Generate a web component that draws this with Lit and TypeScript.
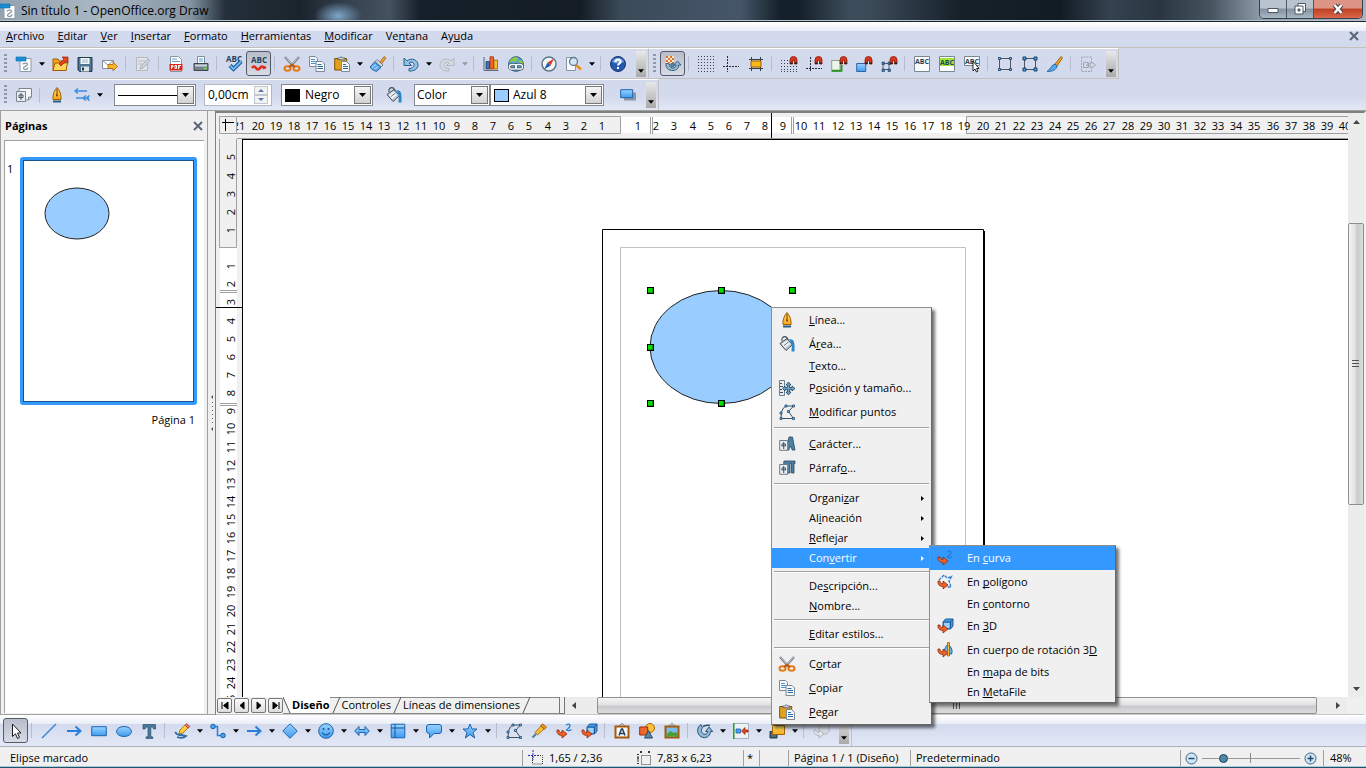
import { LitElement, html, svg, css, nothing } from "lit";
import { customElement } from "lit/decorators.js";
import { classMap } from "lit/directives/class-map.js";

const magnet = svg`<path d="M9 8V4a3.5 3.5 0 0 1 7 0v4h-2.500V4.500h-2V8z" fill="#d8371a" stroke="#8e1503" stroke-width=".8"/><path d="M9 6.500h2.500V8H9zM13.500 6.500H16V8h-2.500z" fill="#222"/>`;
const hook = svg`<path d="M1 7c-.5 4 2 5.500 5 5.300V15l5-4-5-4v2.500C4 9.700 3 9 3 7z" fill="#f0612a" stroke="#8f2a08" stroke-width=".8"/>`;
const props = svg`<path d="M.7 4.500h8v9.800h-8z" fill="#e8ecf0" stroke="#6b7d8c"/><path d="M4.700 6v7M3 8h3.500v2H3z" stroke="#40525f" fill="#fff"/>`;

const ICONS: Record<string, unknown> = {
  doc: svg`<path d="M4 2.500h11v13H4z" fill="#fff" stroke="#8a9ba8"/><path d="M0 1h10v4H0z" fill="#1b8fd6" stroke="#0a6cab" stroke-width=".6"/><path d="M6.500 8q5-2 5 .5c0 2-4.500 2-4 4 .5 1.500 4 1.500 4.500-1" fill="none" stroke="#8d9aa6" stroke-width="1.300"/>`,
  open: svg`<path d="M1 3h5l1 2h7v9.500H1z" fill="#f3a61d" stroke="#a55b04"/><path d="M3 7h12.500L14 14.500H1z" fill="#ffd75a" stroke="#a55b04"/><path d="M7 8l5-5-2-2h6v6l-2-2-5 5z" fill="#e8451c" stroke="#8f1e05" stroke-width=".7"/>`,
  save: svg`<path d="M1 1.500h14v14H2.500L1 14z" fill="#4e7590" stroke="#22394a"/><path d="M3.500 2h9v6h-9z" fill="#f4f8fb"/><path d="M4 10.500h8v5H4z" fill="#dce4ea"/><path d="M5 11.500h2v3H5z" fill="#22394a"/><path d="M5 4h6M5 6h6" stroke="#9fb6c6"/>`,
  mail: svg`<path d="M.5 4.500h11v8H.5z" fill="#fff" stroke="#8593a0"/><path d="M.5 4.500L6 9l5.500-4.500" fill="none" stroke="#8593a0"/><path d="M6 8.500h5V6l4.500 4.500L11 15v-2.500H6z" fill="#f8b62a" stroke="#a96403" stroke-width=".8"/>`,
  edit: svg`<path d="M1.500 1.500h11v13h-11z" fill="#e2e4ea" stroke="#b4b8c0"/><path d="M3 5h7M3 8h5" stroke="#b4b8c0"/><path d="M5 13l1-3 7-7 2 2-7 7z" fill="#cfd2d8" stroke="#a4a8b0" stroke-width=".8"/>`,
  pdf: svg`<path d="M2.500.5h8l3 3v12h-11z" fill="#fff" stroke="#8695a2"/><path d="M4 3h5M4 5.500h8" stroke="#5f9ed1"/><path d="M1.500 8h13v6.500h-13z" fill="#da2a1b"/><path d="M3.500 13v-3.500h1.500V11H3.500M7 9.500v3h1.500v-3zM10.500 13V9.500h2.500M10.500 11H12" fill="none" stroke="#fff"/>`,
  print: svg`<path d="M4.500.5h7v7h-7z" fill="#fff" stroke="#7d8b97"/><path d="M6 3h4M6 5h4" stroke="#4b9be0"/><path d="M1 7.500h14v7H1z" fill="#76828c" stroke="#3c464e"/><path d="M2 8.500h12v2H2z" fill="#cfd6db"/><path d="M11 12.500h3" stroke="#66dd44" stroke-width="1.500"/>`,
  spell: svg`<text x="0" y="6" class="abc">ABC</text><path d="M4 9.500l3.500 3.500L15 5.500" fill="none" stroke="#17518c" stroke-width="4"/><path d="M4 9.500l3.500 3.500L15 5.500" fill="none" stroke="#69b7f5" stroke-width="2"/>`,
  auto: svg`<text x="0" y="7" class="abc">ABC</text><path d="M1 12q2-3 4 0t4 0 4 0l2-1" fill="none" stroke="#e02a1c" stroke-width="2.500"/>`,
  cut: svg`<path d="M1 1l9 10M15 1L6 11" stroke="#75808a" stroke-width="2.200"/><path d="M1.500 1l8 9M14.500 1l-8 9" stroke="#dde3e8" stroke-width=".8"/><ellipse cx="3.500" cy="12.500" rx="3" ry="2.200" fill="none" stroke="#e67a17" stroke-width="2"/><ellipse cx="12.500" cy="12.500" rx="3" ry="2.200" fill="none" stroke="#e67a17" stroke-width="2"/><path d="M5 11l3-2.500L11 11" fill="none" stroke="#c25805" stroke-width="2"/>`,
  copy: svg`<path d="M.5.500h6l2 2v8h-8z" fill="#f6f9fb" stroke="#7a8a98"/><path d="M2 3.500h4M2 5.500h5M2 7.500h5" stroke="#4d94cf"/><path d="M7 5.500h6l2.500 2.500v7.500H7z" fill="#f6f9fb" stroke="#7a8a98"/><path d="M8.500 8.500h4M8.500 10.500h5.500M8.500 12.500h5.500" stroke="#2f6da3"/>`,
  paste: svg`<path d="M.7 2.500h12v11.500H.7z" fill="#e2a11c" stroke="#7d5205"/><path d="M3.500 3.500V2h2a2 2 0 0 1 3.500 0h2v2z" fill="#cfd6db" stroke="#4a535a" stroke-width=".8"/><path d="M7.500 5.500h5l3 3v7h-8z" fill="#f6f9fb" stroke="#7a8a98"/><path d="M9 8.500h3M9 10.500h5M9 12.500h5" stroke="#2f6da3"/>`,
  brush: svg`<path d="M9.500 6.500l4.500-6 2 1.500-4.500 6z" fill="#f0a42a" stroke="#8c5408" stroke-width=".7"/><path d="M7 3.500l6 5.500-2 2-6-5.500z" fill="#cdd7df" stroke="#4b6072" stroke-width=".7"/><path d="M4.500 6l6.500 5.500L6.500 15.500Q2 14.500 0 11z" fill="#57a7ee" stroke="#1c5794" stroke-width=".8"/><path d="M2 11.500l4-3M4 13.500l4-3" stroke="#bfe0fa"/>`,
  undo: svg`<path d="M1 2v7.500h7.500L6 7c3-2 5.500 0 5 2.500-.5 2-2.500 3-5 3V15c5 .5 8.500-2 9-5.500C15.500 4 8.500 1 4 5z" fill="#8fc3e8" stroke="#295f88"/>`,
  redo: svg`<path d="M15 2v7.500H7.500L10 7C7 5 4.500 7 5 9.500c.5 2 2.500 3 5 3V15c-5 .5-8.500-2-9-5.500C.5 4 7.500 1 12 5z" fill="#d4d9e2" stroke="#b2b7c1"/>`,
  chart: svg`<path d="M1 1v13.500h14.500" fill="none" stroke="#5c6b78"/><path d="M3 5.500h3.500V13H3z" fill="#3e72b0" stroke="#1f3f68" stroke-width=".8"/><path d="M7 .8h3.500V13H7z" fill="#f1652a" stroke="#9b2c08" stroke-width=".8"/><path d="M11 4h3.500v9H11z" fill="#f7bf2f" stroke="#9b6504" stroke-width=".8"/>`,
  globe: svg`<circle cx="8" cy="8" r="7.300" fill="#4fa0de" stroke="#2b5a80"/><path d="M1.500 5q2.500-4 7-4l2 2-3 3-4-1-2 2zM10 5l4-1 1 3-1 2z" fill="#8cc940"/><rect x="1.500" y="8.500" width="7" height="4.500" rx="2.200" fill="none" stroke="#435059" stroke-width="2.800"/><rect x="7.500" y="8.500" width="7" height="4.500" rx="2.200" fill="none" stroke="#435059" stroke-width="2.800"/><rect x="1.500" y="8.500" width="7" height="4.500" rx="2.200" fill="none" stroke="#f4f7f9" stroke-width="1.300"/><rect x="7.500" y="8.500" width="7" height="4.500" rx="2.200" fill="none" stroke="#f4f7f9" stroke-width="1.300"/>`,
  compass: svg`<circle cx="8" cy="8" r="7" fill="#f1f6fa" stroke="#5f7889" stroke-width="1.500"/><path d="M13 2.500L9.700 9.500 6.500 6.500z" fill="#e33a22"/><path d="M3 13.500L6.500 6.500l3.200 3z" fill="#1e5cb4"/>`,
  find: svg`<path d="M.5 1.500h9v13h-9z" fill="#f6f9fb" stroke="#8695a2"/><path d="M10 9l5 4.500" stroke="#e79218" stroke-width="2.500"/><circle cx="7.500" cy="5.500" r="4" fill="#cfe6f8" stroke="#68798a" stroke-width="1.300"/>`,
  help: svg`<circle cx="8" cy="8" r="7.500" fill="#2459b0" stroke="#143570"/><path d="M2 6a6.500 6.500 0 0 1 12 0q-6 3-12 0z" fill="#6f9ee0"/><path d="M5.500 6q0-2.500 2.500-2.500T10.500 6C10.500 7.500 8 7.500 8 9.500M8 11v2" fill="none" stroke="#fff" stroke-width="2"/>`,
  edge: svg`<path d="M1 7c-.5 5 2.500 7.700 7 7.500 4-.3 6-2.500 5.500-5.500H16L12.500 5 8.500 9H11c0 2-1.500 3.200-3.500 3C5 11.700 4 10 4.500 8z" fill="#8fbad8" stroke="#34556f" stroke-width=".9"/><path d="M1 0h8v7H1z" fill="#fdeacb"/><path d="M1 0h2v2H1zM5 0h2v2H5zM3 2h2v2H3zM7 2h2v2H7zM1 4h2v2H1zM5 4h2v2H5zM3 6h2v1H3zM7 6h2v1H7z" fill="#d9722c"/><circle cx="7.500" cy="9" r="1.800" fill="#5b89aa" stroke="#34556f" stroke-width=".8"/>`,
  grid: svg`<path d="M0 .5h16M0 3.500h16M0 6.500h16M0 9.500h16M0 12.500h16M0 15.500h16" stroke="#39424b" stroke-dasharray="1 2"/>`,
  guides: svg`<path d="M4.500 0v16M0 10.500h16" stroke="#27303a" stroke-dasharray="2 1"/>`,
  helpl: svg`<path d="M3.500 1v14M12.500 1v14M1 3.500h14M1 12.500h14" stroke="#333c44"/><path d="M3 5h10v6H3z" fill="#f9ba1b" stroke="#a35f00"/>`,
  mgrid: svg`<path d="M0 4.500h8M0 7.500h8M0 10.500h16M0 13.500h16M0 15.500h16" stroke="#39424b" stroke-dasharray="1 2"/>${magnet}`,
  mguide: svg`<path d="M4.500 1v15M0 12.500h16" stroke="#27303a" stroke-dasharray="2 1"/>${magnet}`,
  mmargin: svg`<path d="M.7 4.500H9V15.500H.7z" fill="#edf4ea" stroke="#8aa08a"/><path d="M1 14.800h9.500V9" fill="none" stroke="#2f9325" stroke-width="2"/>${magnet}`,
  mframe: svg`<path d="M.7 7.500h9v8h-9z" fill="url(#blue)" stroke="#2d66a5"/>${magnet}`,
  mpoint: svg`<path d="M2 7.500h6v6H2z" fill="none" stroke="#50616f"/><path d="M1 6h2.500v2.500H1zM7 6h2.500v2.500H7zM1 13h2.500v2.500H1zM7 13h2.500v2.500H7z" fill="#3e79ae" stroke="#1f3f60" stroke-width=".6"/>${magnet}`,
  abc1: svg`<path d="M.5.500h15v15H.5z" fill="#fafcfd" stroke="#7b8790"/><text x="1" y="8" class="abs">ABC</text>`,
  abc2: svg`<path d="M.5.500h15v15H.5z" fill="#fafcfd" stroke="#7b8790"/><path d="M1 2h14v8H1z" fill="#a1e43a"/><text x="1" y="9" class="abs">ABC</text>`,
  abc3: svg`<path d="M.5.500h15v9H.5z" fill="#fafcfd" stroke="#7b8790"/><text x="1" y="8" class="abs">ABC</text><path d="M9 5v10l2-2 1.500 3 1.500-1-1.500-2.500H15z" fill="#fff" stroke="#111" stroke-width=".9"/>`,
  box1: svg`<path d="M2.500 2.500h11v11h-11z" fill="none" stroke="#4a5661"/><path d="M1.500 1.500h2v2h-2zM12.500 1.500h2v2h-2zM1.500 12.500h2v2h-2zM12.500 12.500h2v2h-2z" fill="#8fc0e8" stroke="#274f73"/>`,
  box2: svg`<path d="M2.500 2.500h11v11h-11z" fill="none" stroke="#4a5661"/><path d="M1 1h3v3H1zM12 1h3v3h-3zM1 12h3v3H1zM12 12h3v3h-3z" fill="#4fa8f0" stroke="#153e66"/>`,
  paint: svg`<path d="M8 8l6-7.500 1.500 1.500L10 10z" fill="#f0a42a" stroke="#8c5408" stroke-width=".8"/><path d="M8 8l2.200 2C9 14 6 15.500 0 15.500 3.500 13.500 4 9 8 8z" fill="#57a7ee" stroke="#1c5794" stroke-width=".8"/>`,
  exit: svg`<path d="M1.500 1v14.500h10V1z" fill="none" stroke="#9da3ae" stroke-dasharray="2 1"/><path d="M3.500 6.500h5v5h-5zM7 8h4V5.500L15.500 9 11 12.500V10H7z" fill="#d6dae4" stroke="#a0a5b0"/>`,
  styles: svg`<path d="M3 1.500h12.500V10l-3 3H3z" fill="#f5f7f9" stroke="#7b8790"/><path d="M12.500 13v-3h3" fill="none" stroke="#7b8790"/><path d="M.5 4.500h9v10h-9z" fill="#e8ecf0" stroke="#7b8790"/><path d="M5 6v7M3 8h4v2.500H3z" stroke="#40525f" fill="#fff"/>`,
  pen: svg`<path d="M8 .5C5 4 3.500 8 4 12.500h8C12.500 8 11 4 8 .5z" fill="url(#gold)" stroke="#a35b03"/><path d="M8 2v6" stroke="#7a3c00"/><circle cx="8" cy="8.500" r="1" fill="#7a3c00"/><path d="M4 14.500h8" stroke="#2c5d80" stroke-width="2"/>`,
  ends: svg`<path d="M1 4h12M4 1.500L1 4l3 2.500M2 11h13M12 8.500L9 11l3 2.500M15.500 8.500L12.500 11l3 2.500" fill="none" stroke="#3d8fe0" stroke-width="1.500"/>`,
  bucket: svg`<path d="M1 7.500L8 2.500l5.500 6L7 14.500z" fill="#c3ccd3" stroke="#3f4c57"/><path d="M3 8l5-3.500 3 3.500-5 4z" fill="#eef2f5"/><path d="M5 9.500L9.500 6" stroke="#6a7782"/><path d="M3 5C2 0 8-1 9 4" fill="none" stroke="#4e5b66" stroke-width="1.300"/><path d="M10 3.500c5-1 6 2.500 5.500 12h-3C13 10 13 7 10 3.500z" fill="#2e86ca"/>`,
  shadow: svg`<path d="M4 5.500h12v8H4z" fill="#8e96a6"/><path d="M.7 2.700h12v8h-12z" fill="url(#blue)" stroke="#1d63ad"/>`,
  arrow: svg`<path d="M4.500 1v12.500l3-2.700 2 4.700 2-1-2-4.500H13z" fill="#fff" stroke="#151b22"/>`,
  line: svg`<path d="M1 15L15 1" stroke="#3a86d6" stroke-width="1.500"/>`,
  right: svg`<path d="M1 8h13M9.500 3.500L14.500 8l-5 4.500" fill="none" stroke="#2a7edb" stroke-width="2"/>`,
  rect: svg`<path d="M.7 3.700h14.600v9H.7z" fill="url(#blue)" stroke="#1d63ad"/>`,
  ellipse: svg`<ellipse cx="8" cy="8.500" rx="7.500" ry="5" fill="url(#blue)" stroke="#1d63ad"/>`,
  text: svg`<path d="M2 1.500h12.500V6h-2L12 4H9.800v9.500l2 .5v1.500H5V14l2-.5V4H4.800L4 6H2z" fill="#47799b" stroke="#2b5069" stroke-width=".7"/>`,
  pencil: svg`<path d="M1 9q2 3 5 3t6 1q-3 3-9 1" fill="none" stroke="#2f6ea8" stroke-width="1.800"/><path d="M5 11l1-4 5-5 3 3-5 5z" fill="#ffcf3a" stroke="#94620a" stroke-width=".8"/><path d="M11 2l1.500-1.500L16 3.500 14 5z" fill="#e8766c" stroke="#a83a32" stroke-width=".7"/>`,
  conn: svg`<path d="M3 3.500h4.500v9H13" fill="none" stroke="#2a7edb" stroke-width="1.500"/><circle cx="3" cy="3.500" r="2.300" fill="#4aa3ee" stroke="#1a5da8"/><circle cx="13" cy="12.500" r="2.300" fill="#4aa3ee" stroke="#1a5da8"/>`,
  diamond: svg`<path d="M8 .8L15.300 8 8 15.300.8 8z" fill="url(#blue)" stroke="#1d63ad"/>`,
  smiley: svg`<circle cx="8" cy="8" r="7.300" fill="url(#blue)" stroke="#1d63ad"/><path d="M4 9.500q4 5 8 0" fill="none" stroke="#14508f" stroke-width="1.200"/><circle cx="5.500" cy="6" r="1" fill="#14508f"/><circle cx="10.500" cy="6" r="1" fill="#14508f"/>`,
  both: svg`<path d="M.7 8L5 3.500v3h6v-3L15.300 8 11 12.500v-3H5v3z" fill="url(#blue)" stroke="#1d63ad"/>`,
  flow: svg`<path d="M1.200 1.200h13.600v13.600H1.200z" fill="url(#blue)" stroke="#1d63ad"/><path d="M5 1v14M1 5h14" stroke="#12549a"/>`,
  callout: svg`<path d="M3 1.500h10q2.500 0 2.500 2.500v4q0 2.500-2.500 2.500H8L3.500 15V10.500Q.5 10.500.5 8V4Q.5 1.500 3 1.500z" fill="url(#blue)" stroke="#1d63ad"/>`,
  star: svg`<path d="M8 1l2 5h5l-4 3.500 1.700 5.500L8 11.500 3.300 15 5 9.500 1 6h5z" fill="url(#blue)" stroke="#1d63ad"/>`,
  points: svg`<path d="M2 14.500h12M2 14.500L2.500 8Q4 3 7 2h7.500L9.500 7.500l5 7" fill="none" stroke="#41525f"/><path d="M1 13.500h2v2H1zM13.500 13.500h2v2h-2zM6 1h2v2H6zM13.500 1h2v2h-2zM8.500 6.500h2v2h-2zM1 8h2v2H1z" fill="#7fb8e6" stroke="#1f4f74" stroke-width=".8"/>`,
  glue: svg`<path d="M1.500 14.500L5 11" stroke="#3f7fb0" stroke-width="2"/><path d="M4 9.500l6-6.500 3 3-6.500 6z" fill="#f7bd37" stroke="#93610a" stroke-width=".8"/><path d="M9.500 2.500L12 .8l3.500 3.500-2 2z" fill="#e9930f" stroke="#93610a" stroke-width=".8"/>`,
  curve: svg`${hook}<path d="M10 2q4-2 4 1-.5 2-3.500 4 2 1.500 5-.5" fill="none" stroke="#2c7bd0" stroke-width="1.300"/>`,
  poly: svg`<path d="M2 6L7 1l3 3 4.500-1.500L12 7l2 6h-4" fill="none" stroke="#2c7bd0" stroke-width="1.300" stroke-dasharray="3 1"/>${hook}`,
  cube: svg`<path d="M6 4l2.500-3H16v7l-2.500 3H6z" fill="#4b9be0" stroke="#1b5a9c"/><path d="M6 4h7.500L16 1M13.500 4v7" fill="none" stroke="#1b5a9c"/><path d="M7 5h5.500v5H7z" fill="#9fd0fa"/>${hook}`,
  lathe: svg`<path d="M11 2C8 5 6.500 9 8 12h6.500c1.500-3 0-7-3.500-10z" fill="#6cb2ee" stroke="#1b5a9c"/>${hook}<path d="M10.500.5h2V14h-2z" fill="#f6b42b" stroke="#8d5a04" stroke-width=".7"/>`,
  fontwork: svg`<path d="M5 3l3-2.500L11 3" fill="none" stroke="#777"/><path d="M1.500 3.500h13v11h-13z" fill="#f3f7fa" stroke="#a45a08" stroke-width="2"/><path d="M5 12.500L7.500 6h1L11 12.500M6 10.500h4" fill="none" stroke="#24425c" stroke-width="1.500"/>`,
  shapes: svg`<circle cx="11" cy="5" r="4.500" fill="#fbc035" stroke="#a66a05"/><path d="M.7 4h8v8h-8z" fill="#f0652b" stroke="#9b2c08"/><path d="M9.500 7.500L13.500 15H5.500z" fill="#5d86a5" stroke="#274a66"/>`,
  gallery: svg`<path d="M5 3l3-2.500L11 3" fill="none" stroke="#777"/><path d="M1.500 3.500h13v11h-13z" fill="#79bdf0" stroke="#a45a08" stroke-width="2"/><path d="M2.500 11l4-3 3 2 2-1 2 1.500V13.500h-11z" fill="#4d9e32"/>`,
  rotate: svg`<path d="M4 1.500C-.5 4-.5 11 4 13.700c4.500 2.500 9 0 9.500-5.200h2.200L12 4 8.500 8.500h2.300c-.3 2.500-2.500 3.500-4.500 2.300C4 9.500 4 6.500 5.500 5z" fill="#8fbbdb" stroke="#2b536f"/><path d="M6 3.500q4-2 7-1" fill="none" stroke="#2b536f" stroke-width="1.500"/>`,
  align: svg`<path d="M.5.500h15v15H.5z" fill="#eef2f6" stroke="#a8b2bc"/><path d="M.8 0v16" stroke="#2da32a" stroke-width="1.600"/><path d="M3 6h4.500v4H3z" fill="#4aa3ee" stroke="#1a5da8" stroke-width=".8"/><path d="M8.500 8l3.500-3.500V7h3v2h-3v2.500z" fill="#e8451c" stroke="#8f1e05" stroke-width=".7"/>`,
  arrange: svg`<path d="M1 8.500h7v6.500H1z" fill="#4a6a80" stroke="#1f3544"/><path d="M3.500 2.500h12v9h-12z" fill="url(#gold)" stroke="#a3620a"/>`,
  extrude: svg`<path d="M6 4l2.500-3H16v7l-2.500 3H6z" fill="#d5d9e2" stroke="#b0b5c0"/><path d="M1 7c-.5 4 2 5.500 5 5.300V15l5-4-5-4v2.500C4 9.700 3 9 3 7z" fill="#e2e5ec" stroke="#aeb3be"/>`,
  position: svg`<path d="M.5.500h5v15h-5z" fill="#e8ecf0" stroke="#6b7d8c"/><path d="M1 3.500h2M1 6.500h3M1 9.500h2M1 12.500h3" stroke="#40525f"/><path d="M9.500 2l2.500 3h-1.500v2.500H13V6l3 2.500-3 2.500V9.500h-2.500V12H12l-2.500 3L7 12h1.500V9.500H6V11L3.500 8.500 6 6v1.500h2.500V5H7z" fill="#6fa4c8" stroke="#1e3f58" stroke-width=".8"/>`,
  character: svg`<path d="M7 14L10 1h3.500L16 14h-3l-.5-3h-2l-.5 3z" fill="#4d809f" stroke="#264a62" stroke-width=".8"/>${props}`,
  paragraph: svg`<path d="M5 1h11v2.500h-1V13h-2.500V3.500h-1.500V13H8.500V8C5.500 8 4 3 5 1z" fill="#4d809f" stroke="#264a62" stroke-width=".8"/>${props}`,
  pos: svg`<path d="M5 0v10M0 5.500h10" stroke="#2525d8" stroke-dasharray="2 1"/><path d="M4.500 6v8h10V5.500h-5" fill="none" stroke="#333" stroke-dasharray="1 1"/>`,
  size: svg`<path d="M5.500 5.500h9v9h-9z" fill="none" stroke="#333" stroke-dasharray="1 1"/><path d="M4 1l2 2M6 1L4 3M12 1l2 2M14 1l-2 2M1 4.500h2M1 8h2M1 13.500h2M2 6v6" stroke="#333"/>`,
  close: svg`<path d="M4 4l8 8M12 4l-8 8" stroke="#5a6675" stroke-width="2"/>`,
};

const icon = (name: string) => svg`<svg class="icon" viewBox="0 0 16 16" width="16" height="16" aria-hidden="true">${ICONS[name]}</svg>`;

/* Button names; "v" is a drop-down arrow, "|" a separator, a trailing "!" marks a pressed button. */
const STANDARD = "doc v open save mail | edit | pdf print | spell auto! | cut copy paste v brush | undo v redo v | chart globe | compass find v | help".split(" ");
const OPTIONS = "edge! | grid guides helpl | mgrid mguide mmargin mframe mpoint | abc1 abc2 abc3 | box1 box2 paint | exit".split(" ");
const DRAWING = "arrow! | line right rect ellipse text | pencil v conn v right v diamond v smiley v both v flow v callout v star v | points glue curve cube | fontwork shapes gallery | rotate v align v arrange v | extrude".split(" ");
const MENUS = ["&Archivo", "&Editar", "&Ver", "&Insertar", "&Formato", "&Herramientas", "&Modificar", "Ve&ntana", "Ay&uda"];

type Item = { label: string; icon?: string; sub?: boolean; on?: boolean } | null;
const CONTEXT: Item[] = [
  { label: "&Línea...", icon: "pen" },
  { label: "Á&rea...", icon: "bucket" },
  { label: "&Texto..." },
  { label: "P&osición y tamaño...", icon: "position" },
  { label: "&Modificar puntos", icon: "points" },
  null,
  { label: "&Carácter...", icon: "character" },
  { label: "Párraf&o...", icon: "paragraph" },
  null,
  { label: "Organi&zar", sub: true },
  { label: "Al&ineación", sub: true },
  { label: "&Reflejar", sub: true },
  { label: "Con&vertir", sub: true, on: true },
  null,
  { label: "De&scripción..." },
  { label: "&Nombre..." },
  null,
  { label: "&Editar estilos..." },
  null,
  { label: "C&ortar", icon: "cut" },
  { label: "&Copiar", icon: "copy" },
  { label: "&Pegar", icon: "paste" },
];
const CONVERT: Item[] = [
  { label: "En &curva", icon: "curve", on: true },
  { label: "En &polígono", icon: "poly" },
  { label: "En &contorno" },
  { label: "En &3D", icon: "cube" },
  { label: "En cuerpo de rotación 3&D", icon: "lathe" },
  { label: "En &mapa de bits" },
  { label: "En &MetaFile" },
];

const mnemonic = (s: string) => {
  const i = s.indexOf("&");
  return html`${s.slice(0, i)}<u>${s[i + 1]}</u>${s.slice(i + 2)}`;
};

/* Screen position of the n-th centimetre, measured from the page edge. */
const cm = (n: number) => Math.round((n * 725) / 40);
const range = (a: number, b: number) => Array.from({ length: b - a + 1 }, (_, i) => a + i).filter((n) => n !== 0);

@customElement("app-root")
export class AppRoot extends LitElement {
  static styles = css`
    :host { display: flex; flex-direction: column; height: 100vh; overflow: hidden; position: relative; font: 11px/16px "Open Sans", "Noto Sans", sans-serif; color: #000; background: #f0f0f0; }
    * { box-sizing: border-box; }
    button, select, input { font: inherit; color: inherit; margin: 0; padding: 0; border: 0; background: none; border-radius: 0; appearance: none; outline: none; }
    button { display: flex; align-items: center; justify-content: center; white-space: nowrap; }
    ul { list-style: none; margin: 0; padding: 0; }
    u { text-underline-offset: 1px; text-decoration-thickness: 1px; text-decoration-skip-ink: none; }
    .defs { position: absolute; }
    .icon { display: block; flex: none; overflow: visible; }
    .abc { font: bold 8px "Open Sans", sans-serif; fill: #24425c; }
    .abs { font: bold 7px "Open Sans", sans-serif; fill: #24425c; }

    .title { display: flex; align-items: center; height: 22px; flex: none; gap: 5px; border-bottom: 1px solid #1c242c; box-shadow: inset 0 -1px #b4bfca;
      background:
        radial-gradient(ellipse 24px 14px at 338px 16px, #7fa6c9, transparent),
        linear-gradient(90deg, #93a3b2 0, #aab7c4 100px, #8595a3 190px, #24303a 225px, #1a242d 300px, #35434f 350px, #44525f 390px, #16202a 420px, #141d26 580px, #3b4a58 620px, #46566a 740px, #15212a 780px, #15212a 800px, #3d4d5b 850px, #3c4b59 870px, #16212a 960px, #131c25 1060px, #34424f 1110px, #2a3742 1160px, #45535f 1210px, #8d9ba8 1260px, #a9b5c0 100%); }
    .title h1 { flex: 1; margin: 0; font: 12px/16px "Open Sans", sans-serif; }
    .win { display: flex; align-self: flex-start; height: 19px; margin-right: 3px; border: 1px solid #35424e; border-top: 0; border-radius: 0 0 5px 5px; overflow: hidden; }
    .win button { width: 27px; background: linear-gradient(#b9c3cd 45%, #8492a0 50%, #a9b8c6); border-right: 1px solid #4c5a67; }
    .win .quit { width: 48px; border: 0; background: linear-gradient(#dc9585 45%, #c03f24 50%, #d9694a); }

    .bars { flex: none; background: linear-gradient(#fff 0, #e9edf7 9px, #d3daed 9px, #d3daed 74px, #e3e8f6 88px); }
    .menubar { display: flex; height: 26px; align-items: center; justify-content: space-between; border-bottom: 1px solid #c3c0bb; padding: 2px 4px 0 0; }
    .menubar ul { display: flex; gap: 1px; }
    .menubar li button { padding: 0 6px; height: 20px; }
    .row { display: flex; height: 31px; }
    .tools { display: flex; align-items: center; border-top: 1px solid #fff; border-bottom: 1px solid #c3c0bb; border-right: 1px solid #c3c0bb; padding-right: 2px; }
    .row.second .tools { border-bottom: 0; }
    .grip { width: 3px; height: 20px; margin: 0 4px; background: repeating-linear-gradient(#8f97a8 0 2px, transparent 2px 4px); }
    .drawing .grip { display: none; }
    .tool { width: 25px; height: 25px; flex: none; }
    .tool.on { border: 1px solid #555b66; border-radius: 3px; background: linear-gradient(#b9bdca, #d8dbe5); }
    .drop { width: 11px; height: 25px; flex: none; }
    .sep { width: 1px; height: 15px; margin: 0 4px 0 3px; background: #b9bccb; flex: none; }
    .more { width: 10px; height: 26px; margin-left: 6px; background: linear-gradient(#e9e9ea, #a9a9aa); align-items: flex-end; padding-bottom: 4px; flex: none; }
    .combo { display: flex; align-items: center; height: 22px; border: 1px solid #85888f; background: #fff; padding: 1px; font-size: 12px; }
    .combo select { flex: 1; width: 0; padding-left: 5px; height: 18px; }
    .combo .btn { width: 17px; height: 18px; display: flex; align-items: center; justify-content: center; border: 1px solid #777; background: linear-gradient(#f5f5f5, #d2d2d2); }
    .combo svg { display: block; flex: none; }
    .stroke { flex: 1; margin-left: 2px; border-top: 1px solid #000; }
    .w-line { width: 82px; margin-left: 9px; }
    .w-line select { position: absolute; width: 60px; }
    .w-width { width: 68px; margin: 0 9px 0 8px; border-color: #b5b8c0; }
    .w-width input { width: 48px; padding-left: 2px; }
    .spin { display: flex; flex-direction: column; }
    .spin button { width: 14px; height: 9px; border: 1px solid #c3c6cc; background: #f2f2f2; }
    .w-color { width: 92px; }
    .w-fill { width: 76px; margin-left: 8px; }
    .w-fill select { padding-left: 1px; }
    .w-blue { width: 114px; margin-right: 11px; }
    .w-blue select { padding-left: 4px; }
    .swatch { width: 15px; height: 13px; margin-left: 2px; border: 1px solid #000; background: #000; }
    .swatch.blue { background: #99ccff; }
    .bucket { margin-left: 8px; }

    .main { display: flex; flex: 1; min-height: 0; border-top: 1px solid #a0a0a0; }
    .side { width: 208px; flex: none; display: flex; flex-direction: column; border-right: 1px solid #a0a0a0; border-left: 1px solid #a0a0a0; padding: 0 0 1px 3px; border-bottom: 1px solid #a0a0a0; }
    .side header { display: flex; justify-content: space-between; align-items: center; height: 29px; font-weight: bold; padding: 1px 1px 0; }
    .side h2 { margin: 0; font-size: 11px; }
    .pages { flex: 1; background: #fff; border: 1px solid #a0a0a0; border-right: 0; border-bottom: 0; margin-right: 3px; padding: 16px 6px 0 2px; display: grid; grid-template-columns: 13px 177px; align-content: start; }
    .pages span { padding-top: 4px; }
    .thumb { display: block; height: 248px; padding: 0; border: 3px solid #3399ff; border-radius: 3px; background: #fff; box-shadow: inset 0 0 0 1px #17538c; }
    .thumb svg { display: block; }
    .pages p { grid-column: 2; margin: 7px 2px 0; text-align: right; }
    .split { width: 7px; flex: none; display: flex; align-items: center; justify-content: center; border-bottom: 1px solid #a0a0a0; }

    .editor { flex: 1; min-width: 0; display: flex; flex-direction: column; border-left: 1px solid #808080; border-top: 2px solid #808080; border-right: 2px solid #f0f0f0; }
    .view { flex: 1; display: grid; grid-template: 26px 1fr / 26px 1fr 16px; min-height: 0; overflow: hidden; }
    .view > svg { display: block; width: 100%; height: 100%; overflow: hidden; min-height: 0; min-width: 0; }
    .view > .hruler { width: calc(100% + 5px); margin-left: -5px; }
    .view text { font-size: 11px; text-anchor: middle; }
    .canvas { background: #fff; border-left: 1px solid #000; border-top: 1px solid #000; }
    .vbar { grid-area: 1 / 3 / 3 / 4; display: grid; grid-template-rows: 17px 93px 282px 1fr 17px; background: #ececec; }
    .thumb-v { grid-row: 3; border: 1px solid #8f8f8f; border-radius: 2px; background: linear-gradient(90deg, #f4f4f4, #e2e2e4 45%, #c9cacd 55%, #dcdcdc); }
    .vbar .down { grid-row: 5; }
    .foot { display: flex; height: 18px; flex: none; align-items: center; border-bottom: 1px solid #c8c8c8; }
    .nav { display: flex; gap: 2px; padding-left: 1px; }
    .nav button { width: 15px; height: 15px; border: 1px solid #777; border-radius: 2px; background: linear-gradient(#fbfbfb, #dcdcdc); }
    .tabs { display: flex; height: 17px; width: 276px; background: linear-gradient(#888, #888) top/100% 1px no-repeat, linear-gradient(#888, #888) bottom/100% 1px no-repeat; }
    .tabs button { height: 16px; font-size: 11px; }
    .tabs button.on { background: #fff; font-weight: bold; }
    .tabs svg { display: block; flex: none; }
    .tabend { width: 6px; height: 17px; border: 1px solid #777; border-top: 0; }
    .hbar { flex: 1; display: grid; grid-template-columns: 32px 1fr 30px; height: 17px; background: #ececec; }
    .hbar .left { justify-content: flex-start; padding-left: 7px; }
    .hbar .to-right { justify-content: flex-end; padding-right: 7px; }
    .thumb-h { border: 1px solid #8f8f8f; border-radius: 2px; background: linear-gradient(#f4f4f4, #e2e2e4 45%, #c9cacd 55%, #dcdcdc); display: flex; align-items: center; justify-content: center; }
    .corner { width: 17px; }

    .drawing { display: flex; height: 32px; flex: none; background: linear-gradient(#fff 0, #e9edf7 9px, #d3daed 9px, #e3e9f6 32px); border-bottom: 1px solid #b0afc8; padding-left: 3px; }
    .drawing .tools { border-top: 0; border-bottom: 0; }
    .status { display: flex; align-items: center; height: 21px; flex: none; padding-top: 2px; border-bottom: 1px solid #24506a; box-shadow: inset 0 -1px #9fd0dd; }
    .status > * { display: flex; align-items: center; height: 16px; border-left: 1px solid #a0a0a0; padding-left: 5px; gap: 5px; white-space: nowrap; }
    .status .msg { border: 0; flex: 1; padding-left: 10px; }
    .status .geo { width: 221px; }
    .status .geo span { width: 82px; }
    .status .star { width: 16px; padding-left: 3px; }
    .status .sign { width: 29px; }
    .status .page { width: 122px; }
    .status .style { width: 270px; }
    .status .zoom { width: 143px; padding-left: 4px; gap: 4px; }
    .status .pct { width: 43px; padding-left: 6px; }
    .round { width: 13px; height: 13px; }
    .slider { width: 98px; height: 14px; background: linear-gradient(#8a8a8a, #8a8a8a) 48px 2px/1px 10px no-repeat, linear-gradient(#999, #999) 0 7px/100% 1px no-repeat; }
    .slider::-webkit-slider-thumb { appearance: none; width: 9px; height: 9px; border-radius: 5px; background: #4f87a8; border: 1px solid #1e4560; }

    .menu { position: absolute; background: #f0f0f0; border: 1px solid #8f8f8f; box-shadow: 3px 3px 3px rgba(0, 0, 0, .55); border-right-color: #666; border-bottom-color: #666; }
    .ctx { left: 771px; top: 307px; width: 161px; }
    .conv { left: 929px; top: 545px; width: 187px; }
    .menu button { width: 100%; height: 20px; justify-content: flex-start; padding: 0 7px; }
    .menu button.tall { height: 24px; }
    .menu .slot { width: 30px; flex: none; }
    .menu .name { flex: 1; text-align: left; }
    .menu button.on { background: #3399ff; color: #fff; }
    .menu hr { margin: 3px 2px; height: 2px; border: 0; border-top: 1px solid #a0a0a0; background: #fff; }
  `;

  private tri(color = "#000", w = 7) {
    return svg`<svg width=${w} height="4" viewBox="0 0 7 4" aria-hidden="true"><path d="M0 0h7L3.500 4z" fill=${color} /></svg>`;
  }

  private bar(items: string[], label: string) {
    return html`<div class="tools" role="toolbar" aria-label=${label}>
      <span class="grip"></span>
      ${items.map((it, i) => this.tool(it, items[i - 1]))}
      <button class="more" aria-label="Más">${this.tri("#000", 6)}</button>
    </div>`;
  }

  private tool(it: string, prev = "") {
    if (it === "|") return html`<span class="sep"></span>`;
    if (it === "v") return html`<button class="drop" aria-label="Opciones">${this.tri(prev === "redo" ? "#999" : "#000", 6)}</button>`;
    const on = it.endsWith("!");
    const name = on ? it.slice(0, -1) : it;
    return html`<button class=${classMap({ tool: true, on })} aria-label=${name}>${icon(name)}</button>`;
  }

  private menu(items: Item[], cls: string, label: string) {
    return html`<ul class="menu ${cls}" role="menu" aria-label=${label}>
      ${items.map((it) => it
        ? html`<li role="none"><button role="menuitem" class=${classMap({ tall: !!it.icon, on: !!it.on })}>
            <span class="slot">${it.icon ? icon(it.icon) : nothing}</span>
            <span class="name">${mnemonic(it.label)}</span>
            ${it.sub ? svg`<svg width="3" height="5" viewBox="0 0 3 5"><path d="M0 0v5l3-2.500z" fill="currentColor"/></svg>` : nothing}
          </button></li>`
        : html`<li role="separator"><hr /></li>`)}
    </ul>`;
  }

  private hRuler() {
    return svg`<svg class="hruler" aria-label="Regla horizontal"><g transform="translate(5 0)">
      <path d="M-5 4h1200v16H-5z" fill="#fff"/>
      <path d="M-9 3.500H378.500v17H-9zM724.500 3.500H1200v17H724.500z" fill="#f0f0f0" stroke="#a0a0a0"/>
      <path d="M408.500 4v17M410.500 4v17M549.500 4v17M551.500 4v17" stroke="#a0a0a0"/>
      <path d="M529.500 0v26" stroke="#000"/>
      <path d="M-5 25.500h1200" stroke="#a0a0a0"/>
      ${range(-21, 40).map((n) => svg`<text x=${378 + cm(n)} y="17">${Math.abs(n)}</text>`)}
    </g></svg>`;
  }

  private vRuler() {
    return svg`<svg aria-label="Regla vertical">
      <path d="M4 0h17v600H4z" fill="#fff"/>
      <path d="M3.500-9h17V108.500h-17z" fill="#f0f0f0" stroke="#a0a0a0"/>
      <path d="M4 151.500h17M4 153.500h17M4 264.500h17M4 266.500h17" stroke="#a0a0a0"/>
      <path d="M0 168.500h26" stroke="#000"/>
      ${range(-5, 25).map((n) => svg`<text transform="translate(19 ${109 + cm(n)}) rotate(-90)">${Math.abs(n)}</text>`)}
    </svg>`;
  }

  private canvas() {
    const grips = [[407, 150], [478, 150], [549, 150], [407, 207], [407, 263], [478, 263], [549, 207], [549, 263]];
    return svg`<svg class="canvas" role="img" aria-label="Elipse">
      <path d="M361 91h381v600H361z" fill="#000"/>
      <path d="M359.500 89.500h381v600h-381z" fill="#fff" stroke="#000"/>
      <path d="M377.500 107.500h345v600h-345z" fill="none" stroke="#c0c0c0"/>
      <ellipse cx="478" cy="207" rx="71" ry="56.500" fill="#99ccff" stroke="#222"/>
      ${grips.map(([x, y]) => svg`<rect x=${x - 3} y=${y - 3} width="7" height="7" fill="#000"/><rect x=${x - 2} y=${y - 2} width="5" height="5" fill="#009a00"/><rect x=${x - 2} y=${y - 2} width="4" height="4" fill="#00e000"/>`)}
    </svg>`;
  }

  private slant(open = false) {
    return open
      ? svg`<svg width="9" height="17" viewBox="0 0 9 17"><path d="M0 0l7 16h2V0z" fill="#fff"/><path d="M0 0l7 16" stroke="#555"/></svg>`
      : svg`<svg width="12" height="17" viewBox="0 0 12 17"><path d="M10 0L3 16" stroke="#555"/></svg>`;
  }

  render() {
    return html`
      <svg class="defs" width="0" height="0" aria-hidden="true">
        <linearGradient id="blue" x2="0" y2="1"><stop stop-color="#9ad3ff"/><stop offset="1" stop-color="#3f9bef"/></linearGradient>
        <linearGradient id="gold" x2="0" y2="1"><stop stop-color="#ffe066"/><stop offset="1" stop-color="#f7a81c"/></linearGradient>
      </svg>
      <header class="title">${icon("doc")}<h1>Sin título 1 - OpenOffice.org Draw</h1>
        <div class="win">
          <button aria-label="Minimizar"><svg width="12" height="12"><path d="M1 5.500h10v4H1z" fill="#fff" stroke="#4a5560"/></svg></button>
          <button aria-label="Restaurar"><svg width="12" height="14"><path d="M4 1.500h7.500v8H4z" fill="#fff" stroke="#4a5560"/><path d="M1 4h8v8H1z" fill="#fff" stroke="#4a5560"/><path d="M4 7h2v2H4z" fill="#99a" stroke="#4a5560"/></svg></button>
          <button class="quit" aria-label="Cerrar"><svg width="14" height="12"><path d="M3.500 2l7 8M10.500 2l-7 8" stroke="#4a4048" stroke-width="4.500"/><path d="M3.500 2l7 8M10.500 2l-7 8" stroke="#fff" stroke-width="2.500"/></svg></button>
        </div>
      </header>
      <div class="bars">
        <nav class="menubar"><ul>${MENUS.map((m) => html`<li><button>${mnemonic(m)}</button></li>`)}</ul><button aria-label="Cerrar documento">${icon("close")}</button></nav>
        <div class="row">${this.bar(STANDARD, "Estándar")}${this.bar(OPTIONS, "Opciones")}</div>
        <div class="row second"><div class="tools" role="toolbar" aria-label="Línea y relleno">
          <span class="grip"></span>
          ${["styles", "|", "pen", "ends", "v"].map((t) => this.tool(t))}
          <div class="combo w-line"><span class="stroke"></span><select aria-label="Estilo de línea"><option></option></select><span class="btn">${this.tri()}</span></div>
          <div class="combo w-width"><input aria-label="Ancho de línea" value="0,00cm" /><span class="spin">
            <button aria-label="Aumentar"><svg width="6" height="3"><path d="M0 3h6L3 0z" fill="#5577aa"/></svg></button>
            <button aria-label="Reducir"><svg width="6" height="3"><path d="M0 0h6L3 3z" fill="#5577aa"/></svg></button></span></div>
          <div class="combo w-color"><span class="swatch"></span><select aria-label="Color de línea"><option>Negro</option></select><span class="btn">${this.tri()}</span></div>
          <span class="bucket">${this.tool("bucket")}</span>
          <div class="combo w-fill"><select aria-label="Tipo de relleno"><option>Color</option></select><span class="btn">${this.tri()}</span></div>
          <div class="combo w-blue"><span class="swatch blue"></span><select aria-label="Relleno"><option>Azul 8</option></select><span class="btn">${this.tri()}</span></div>
          ${this.tool("shadow")}
          <button class="more" aria-label="Más">${this.tri("#000", 6)}</button>
        </div></div>
      </div>
      <main class="main">
        <aside class="side">
          <header><h2>Páginas</h2><button aria-label="Cerrar panel">${icon("close")}</button></header>
          <div class="pages"><span>1</span>
            <button class="thumb" aria-label="Página 1"><svg width="171" height="242"><ellipse cx="54" cy="53.500" rx="32" ry="25.500" fill="#99ccff" stroke="#222"/></svg></button>
            <p>Página 1</p>
          </div>
        </aside>
        <div class="split"><svg width="4" height="36"><path d="M3 0v4L1 2zM3 32v4l-2-2z" fill="#555"/><path d="M2.500 7v22" stroke="#666" stroke-dasharray="1 3"/></svg></div>
        <section class="editor">
          <div class="view">
            <svg aria-hidden="true"><path d="M3.500 3.500h17v17h-17z" fill="#f0f0f0" stroke="#a0a0a0"/><path d="M6 9.500h12M9.500 6v12" stroke="#000"/></svg>
            ${this.hRuler()}
            ${this.vRuler()}
            ${this.canvas()}
            <div class="vbar">
              <button aria-label="Subir"><svg width="7" height="4"><path d="M0 4h7L3.500 0z" fill="#444"/></svg></button>
              <button class="thumb-v" aria-label="Desplazamiento vertical"><svg width="8" height="8"><path d="M0 .5h7M0 3.500h7M0 6.500h7" stroke="#555"/></svg></button>
              <button class="down" aria-label="Bajar">${this.tri("#444")}</button>
            </div>
          </div>
          <div class="foot">
            <div class="nav">
              ${["M4 3v7M10 3v7L5.500 6.500z", "M9 3v7L5 6.500z", "M5 3v7L9 6.500z", "M10 3v7M4 3v7L8.500 6.500z"].map((d) => html`<button aria-label="Ir a página"><svg width="13" height="13"><path d=${d} stroke="#000"/></svg></button>`)}
            </div>
            <div class="tabs">
              ${this.slant(true)}<button class="on">Diseño</button>${this.slant()}<button>Controles</button>${this.slant()}<button>Líneas de dimensiones</button>${this.slant()}
            </div>
            <span class="tabend"></span>
            <div class="hbar">
              <button class="left" aria-label="Izquierda"><svg width="4" height="7"><path d="M4 0v7L0 3.500z" fill="#444"/></svg></button>
              <button class="thumb-h" aria-label="Desplazamiento horizontal"><svg width="8" height="7"><path d="M.5 0v7M3.500 0v7M6.500 0v7" stroke="#555"/></svg></button>
              <button class="to-right" aria-label="Derecha"><svg width="4" height="7"><path d="M0 0v7l4-3.500z" fill="#444"/></svg></button>
            </div>
            <span class="corner"></span>
          </div>
        </section>
      </main>
      <div class="drawing">${this.bar(DRAWING, "Dibujo")}</div>
      <footer class="status">
        <div class="msg">Elipse marcado</div>
        <div class="geo">${icon("pos")}<span>1,65 / 2,36</span>${icon("size")}<span>7,83 x 6,23</span></div>
        <div class="star">*</div>
        <div class="sign"></div>
        <div class="page">Página 1 / 1 (Diseño)</div>
        <div class="style">Predeterminado</div>
        <div class="zoom">
          <button class="round" aria-label="Alejar"><svg width="13" height="13"><circle cx="6.500" cy="6.500" r="5.500" fill="#cfe6f8" stroke="#3b6482"/><path d="M3.500 6.500h6" stroke="#1e4a6d" stroke-width="1.500"/></svg></button>
          <input class="slider" type="range" aria-label="Escala" min="0" max="100" value="19" />
          <button class="round" aria-label="Acercar"><svg width="13" height="13"><circle cx="6.500" cy="6.500" r="5.500" fill="#cfe6f8" stroke="#3b6482"/><path d="M3.500 6.500h6M6.500 3.500v6" stroke="#1e4a6d" stroke-width="1.500"/></svg></button>
        </div>
        <div class="pct">48%</div>
      </footer>
      ${this.menu(CONTEXT, "ctx", "Elipse")}
      ${this.menu(CONVERT, "conv", "Convertir")}
    `;
  }
}
